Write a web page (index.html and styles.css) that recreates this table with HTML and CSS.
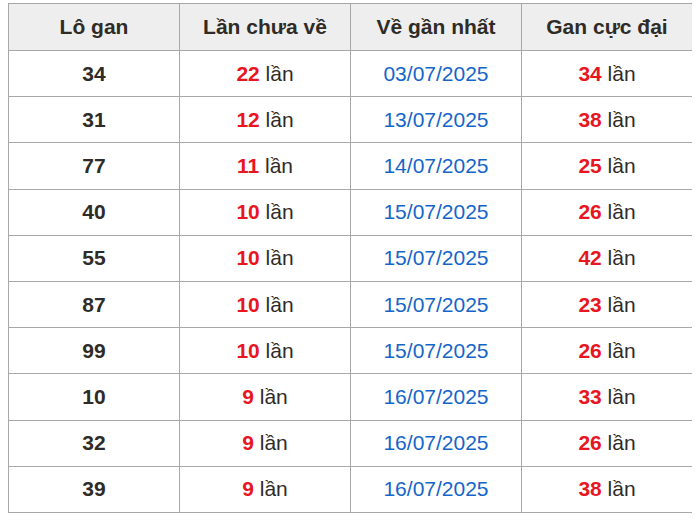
FILE: index.html
```html
<!DOCTYPE html>
<html lang="vi">
<head>
<meta charset="utf-8">
<link rel="stylesheet" href="styles.css">
</head>
<body>
<table class="gan">
<thead>
<tr><th>Lô gan</th><th>Lần chưa về</th><th>Về gần nhất</th><th>Gan cực đại</th></tr>
</thead>
<tbody>
<tr><td class="num">34</td><td><b class="red">22</b> lần</td><td class="date">03/07/2025</td><td><b class="red">34</b> lần</td></tr>
<tr><td class="num">31</td><td><b class="red">12</b> lần</td><td class="date">13/07/2025</td><td><b class="red">38</b> lần</td></tr>
<tr><td class="num">77</td><td><b class="red">11</b> lần</td><td class="date">14/07/2025</td><td><b class="red">25</b> lần</td></tr>
<tr><td class="num">40</td><td><b class="red">10</b> lần</td><td class="date">15/07/2025</td><td><b class="red">26</b> lần</td></tr>
<tr><td class="num">55</td><td><b class="red">10</b> lần</td><td class="date">15/07/2025</td><td><b class="red">42</b> lần</td></tr>
<tr><td class="num">87</td><td><b class="red">10</b> lần</td><td class="date">15/07/2025</td><td><b class="red">23</b> lần</td></tr>
<tr><td class="num">99</td><td><b class="red">10</b> lần</td><td class="date">15/07/2025</td><td><b class="red">26</b> lần</td></tr>
<tr><td class="num">10</td><td><b class="red">9</b> lần</td><td class="date">16/07/2025</td><td><b class="red">33</b> lần</td></tr>
<tr><td class="num">32</td><td><b class="red">9</b> lần</td><td class="date">16/07/2025</td><td><b class="red">26</b> lần</td></tr>
<tr><td class="num">39</td><td><b class="red">9</b> lần</td><td class="date">16/07/2025</td><td><b class="red">38</b> lần</td></tr>
</tbody>
</table>
</body>
</html>
```
FILE: styles.css
```css
html, body {
  background: #ffffff;
}
body {
  margin: 3px 8px;
  font-family: "Liberation Sans", Arial, sans-serif;
  font-size: 21px;
  color: #2f2b27;
}
.gan {
  width: 685px;
  border-collapse: collapse;
  table-layout: fixed;
}
.gan th, .gan td {
  border: 1.5px solid #a8a8a8;
  text-align: center;
  padding: 0;
}
.gan th {
  background: #eeeeee;
  height: 46px;
  font-weight: bold;
}
.gan td {
  height: 45.2px;
}
.num {
  font-weight: bold;
}
.red {
  color: #e8161f;
}
.date {
  color: #1565c9;
}
```
